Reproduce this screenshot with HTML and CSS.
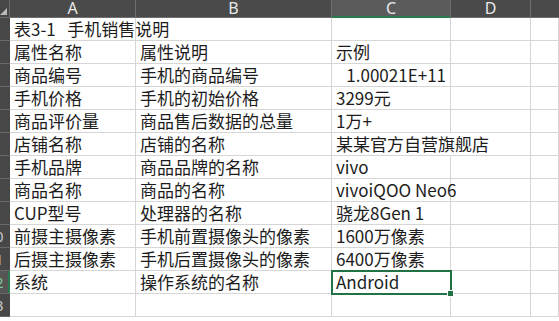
FILE: index.html
```
<!DOCTYPE HTML>
<html lang="zh-CN">
    <head>
        <meta charset="UTF-8">
        <title>手机销售说明</title>
        <link rel="stylesheet" href="styles.css">
    </head>
    <body>
        <div class="sheet">
            <!-- 列标题 -->
            <div class="corner"><span class="tri"></span></div>
            <div class="colHead">A</div>
            <div class="colHead">B</div>
            <div class="colHead active">C</div>
            <div class="colHead">D</div>
            <div class="colHead last"></div>

            <div class="rowHead"><span>1</span></div>
            <div class="cell">表3-1&nbsp;&nbsp;&nbsp;手机销售说明</div>
            <div class="cell"></div>
            <div class="cell"></div>
            <div class="cell"></div>
            <div class="cell"></div>

            <div class="rowHead"><span>2</span></div>
            <div class="cell">属性名称</div>
            <div class="cell">属性说明</div>
            <div class="cell">示例</div>
            <div class="cell"></div>
            <div class="cell"></div>

            <div class="rowHead"><span>3</span></div>
            <div class="cell">商品编号</div>
            <div class="cell">手机的商品编号</div>
            <div class="cell num">1.00021E+11</div>
            <div class="cell"></div>
            <div class="cell"></div>

            <div class="rowHead"><span>4</span></div>
            <div class="cell">手机价格</div>
            <div class="cell">手机的初始价格</div>
            <div class="cell">3299元</div>
            <div class="cell"></div>
            <div class="cell"></div>

            <div class="rowHead"><span>5</span></div>
            <div class="cell">商品评价量</div>
            <div class="cell">商品售后数据的总量</div>
            <div class="cell">1万+</div>
            <div class="cell"></div>
            <div class="cell"></div>

            <div class="rowHead"><span>6</span></div>
            <div class="cell">店铺名称</div>
            <div class="cell">店铺的名称</div>
            <div class="cell over">某某官方自营旗舰店</div>
            <div class="cell"></div>
            <div class="cell"></div>

            <div class="rowHead"><span>7</span></div>
            <div class="cell">手机品牌</div>
            <div class="cell">商品品牌的名称</div>
            <div class="cell">vivo</div>
            <div class="cell"></div>
            <div class="cell"></div>

            <div class="rowHead"><span>8</span></div>
            <div class="cell">商品名称</div>
            <div class="cell">商品的名称</div>
            <div class="cell">vivoiQOO Neo6</div>
            <div class="cell"></div>
            <div class="cell"></div>

            <div class="rowHead"><span>9</span></div>
            <div class="cell">CUP型号</div>
            <div class="cell">处理器的名称</div>
            <div class="cell">骁龙8Gen 1</div>
            <div class="cell"></div>
            <div class="cell"></div>

            <div class="rowHead"><span>10</span></div>
            <div class="cell">前摄主摄像素</div>
            <div class="cell">手机前置摄像头的像素</div>
            <div class="cell">1600万像素</div>
            <div class="cell"></div>
            <div class="cell"></div>

            <div class="rowHead"><span>11</span></div>
            <div class="cell">后摄主摄像素</div>
            <div class="cell">手机后置摄像头的像素</div>
            <div class="cell">6400万像素</div>
            <div class="cell"></div>
            <div class="cell"></div>

            <div class="rowHead active"><span>12</span></div>
            <div class="cell">系统</div>
            <div class="cell">操作系统的名称</div>
            <div class="cell selected">Android</div>
            <div class="cell"></div>
            <div class="cell"></div>

            <div class="rowHead"><span>13</span></div>
            <div class="cell"></div>
            <div class="cell"></div>
            <div class="cell"></div>
            <div class="cell"></div>
            <div class="cell"></div>
        </div>
    </body>
</html>
```

FILE: styles.css
```
body,html{
margin: 0;
padding: 0;
background-color: #fff;
overflow: hidden;
font-family: "Noto Sans CJK SC", "Noto Sans", sans-serif;
}
.sheet{
display: grid;
grid-template-columns: 10px 126px 196px 119px 80px 1fr;
grid-template-rows: 18px repeat(13, 23px);
width: 559px;
}
.corner{
background-color: #474747;
border-right: 1px solid #6a6a6a;
border-bottom: 1px solid #6a6a6a;
position: relative;
overflow: hidden;
}
.tri{
position: absolute;
right: 2px;
bottom: 2px;
width: 0;
height: 0;
border-left: 7px solid transparent;
border-bottom: 7px solid #b9b9b9;
}
.colHead{
background-color: #4a4a4a;
color: #e8e8e8;
font-family: "Noto Sans", sans-serif;
font-size: 16px;
line-height: 17px;
text-align: center;
border-right: 1px solid #6e6e6e;
border-bottom: 1px solid #6e6e6e;
}
.colHead.active{
background-color: #5b5b5b;
line-height: 16px;
border-bottom: 2px solid #2a7a4f;
}
.colHead.last{
border-right: none;
}
.rowHead{
background-color: #474747;
color: #c8c8c8;
font-size: 15px;
line-height: 22px;
border-bottom: 1px solid #686868;
overflow: hidden;
}
.rowHead span{
display: block;
width: 30px;
margin-left: -20px;
text-align: center;
font-family: "Noto Sans", sans-serif;
}
.rowHead.active{
background-color: #555;
color: #7fc49b;
box-shadow: inset -2px 0 0 #2a7a4f;
}
.cell{
border-right: 1px solid #d6d6d6;
border-bottom: 1px solid #d6d6d6;
color: #1c1c1c;
font-size: 17px;
line-height: 22px;
padding: 0 4px;
white-space: nowrap;
}
.cell.num{
text-align: right;
}
.cell.over{
overflow: visible;
position: relative;
z-index: 1;
border-right-color: transparent;
}
.cell.selected{
position: relative;
outline: 2px solid #217346;
outline-offset: -1px;
}
.cell.selected::after{
content: "";
position: absolute;
right: -4px;
bottom: -4px;
width: 5px;
height: 5px;
background-color: #217346;
border: 1px solid #fff;
}
```
